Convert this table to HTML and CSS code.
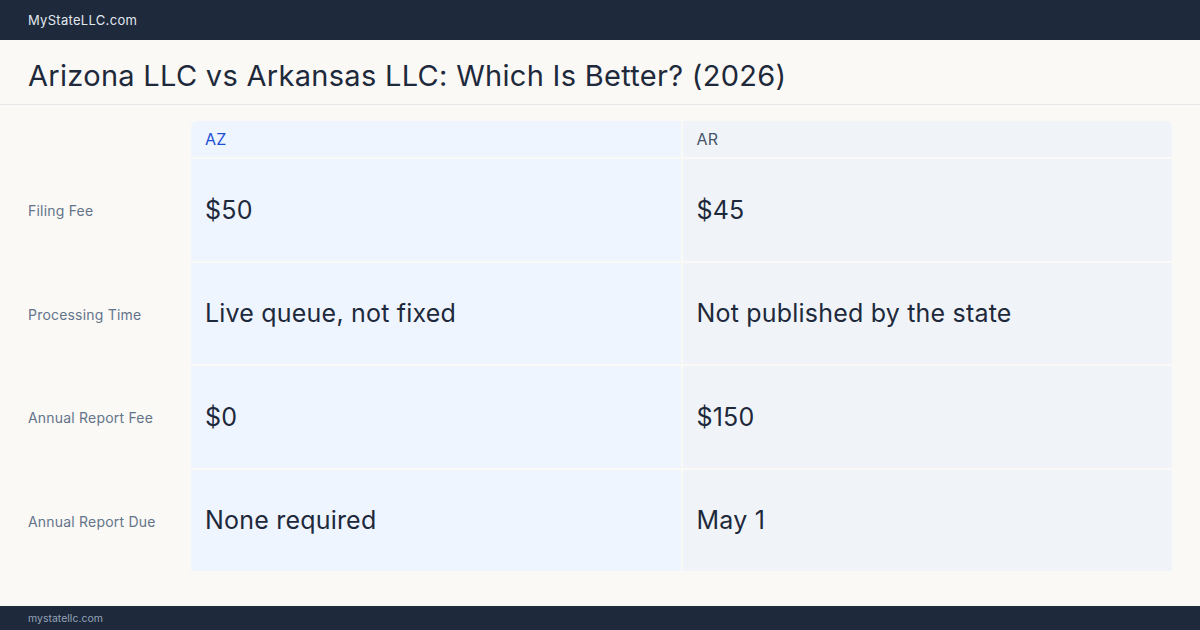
FILE: index.html
```html
<!DOCTYPE html>
<html lang="en">
<head>
    <meta charset="UTF-8">
    <meta name="viewport" content="width=device-width, initial-scale=1.0">
    <title>Arizona LLC vs Arkansas LLC</title>
    <link rel="stylesheet" href="styles.css">
</head>
<body>
    <div class="topbar">MyStateLLC.com</div>

    <div class="title-bar">
        <h1>Arizona LLC vs Arkansas LLC: Which Is Better? (2026)</h1>
    </div>

    <div class="content">
        <div class="compare">
            <div class="label"></div>
            <div class="head az top-left">AZ</div>
            <div class="head ar top-right">AR</div>

            <div class="label">Filing Fee</div>
            <div class="cell az">$50</div>
            <div class="cell ar">$45</div>

            <div class="label">Processing Time</div>
            <div class="cell az">Live queue, not fixed</div>
            <div class="cell ar">Not published by the state</div>

            <div class="label">Annual Report Fee</div>
            <div class="cell az">$0</div>
            <div class="cell ar">$150</div>

            <div class="label">Annual Report Due</div>
            <div class="cell az">None required</div>
            <div class="cell ar">May 1</div>
        </div>
    </div>

    <div class="footer">mystatellc.com</div>
</body>
</html>
```

FILE: styles.css
```css
body {
    font-family: Inter, "Noto Sans", sans-serif;
    background-color: #faf9f5;
    color: #1e293b;
    margin: 0;
    height: 630px;
    display: flex;
    flex-direction: column;
}
.topbar {
    height: 40px;
    background-color: #1e293b;
    color: #e2e8f0;
    font-size: 13px;
    letter-spacing: 0.3px;
    display: flex;
    align-items: center;
    padding: 0 28px;
}
.title-bar {
    height: 64px;
    border-bottom: 1px solid #e5e7eb;
    display: flex;
    align-items: center;
    padding: 0 28px;
}
h1 {
    margin: 0;
    font-size: 29px;
    font-weight: 400;
    letter-spacing: 0.3px;
    color: #1e293b;
    padding-top: 6px;
}
.content {
    flex: 1;
    padding: 16px 28px 0;
}
.compare {
    display: grid;
    grid-template-columns: 161px 1fr 1fr;
    grid-template-rows: 36px repeat(4, 1fr);
    gap: 2px;
    height: 450px;
}
.label {
    display: flex;
    align-items: center;
    font-size: 14px;
    letter-spacing: 0.2px;
    color: #64748b;
    padding-top: 2px;
}
.head {
    display: flex;
    align-items: center;
    padding: 0 14px;
    font-size: 16px;
    letter-spacing: 0.3px;
}
.cell {
    display: flex;
    align-items: center;
    padding: 0 14px;
    font-size: 25px;
    letter-spacing: 0.2px;
    color: #1e293b;
}
.az {
    background-color: #eef5ff;
}
.ar {
    background-color: #f0f4f9;
}
.head.az {
    color: #1d4ed8;
}
.head.ar {
    color: #475569;
}
.top-left {
    border-top-left-radius: 6px;
}
.top-right {
    border-top-right-radius: 6px;
}
.footer {
    height: 24px;
    background-color: #1e293b;
    color: #94a3b8;
    font-size: 10.5px;
    display: flex;
    align-items: center;
    padding: 0 28px;
}
```
